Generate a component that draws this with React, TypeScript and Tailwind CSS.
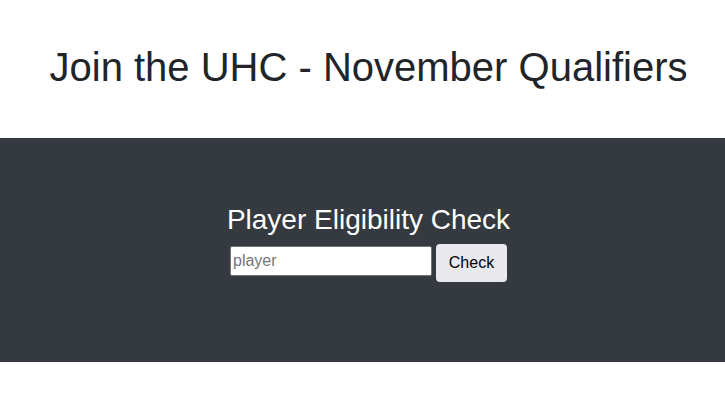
export default function App() {
  return (
    <div className="w-full bg-white" style={{ fontFamily: '"Liberation Sans", Arial, sans-serif' }}>
      <div className="pt-[43px] pb-[47px] pl-[12px] text-center">
        <h1 className="text-[40px] leading-[48px] text-[#212529]">Join the UHC - November Qualifiers</h1>
      </div>
      <div className="bg-[#343a40] pt-[65px] pb-[80px] pl-[12px] flex flex-col items-center">
        <h3 className="text-[28px] leading-[34px] text-white mb-[7px]">Player Eligibility Check</h3>
        <div className="flex items-start gap-[4px]">
          <input
            placeholder="player"
            className="mt-[2px] w-[202px] h-[30px] bg-white border border-[#767676] rounded-[2px] px-[2px] text-[16px] text-black placeholder:text-[#757575]"
          />
          <button className="w-[71px] h-[38px] bg-[#e9e9ed] rounded-[4px] text-[16px] text-black">Check</button>
        </div>
      </div>
    </div>
  );
}
